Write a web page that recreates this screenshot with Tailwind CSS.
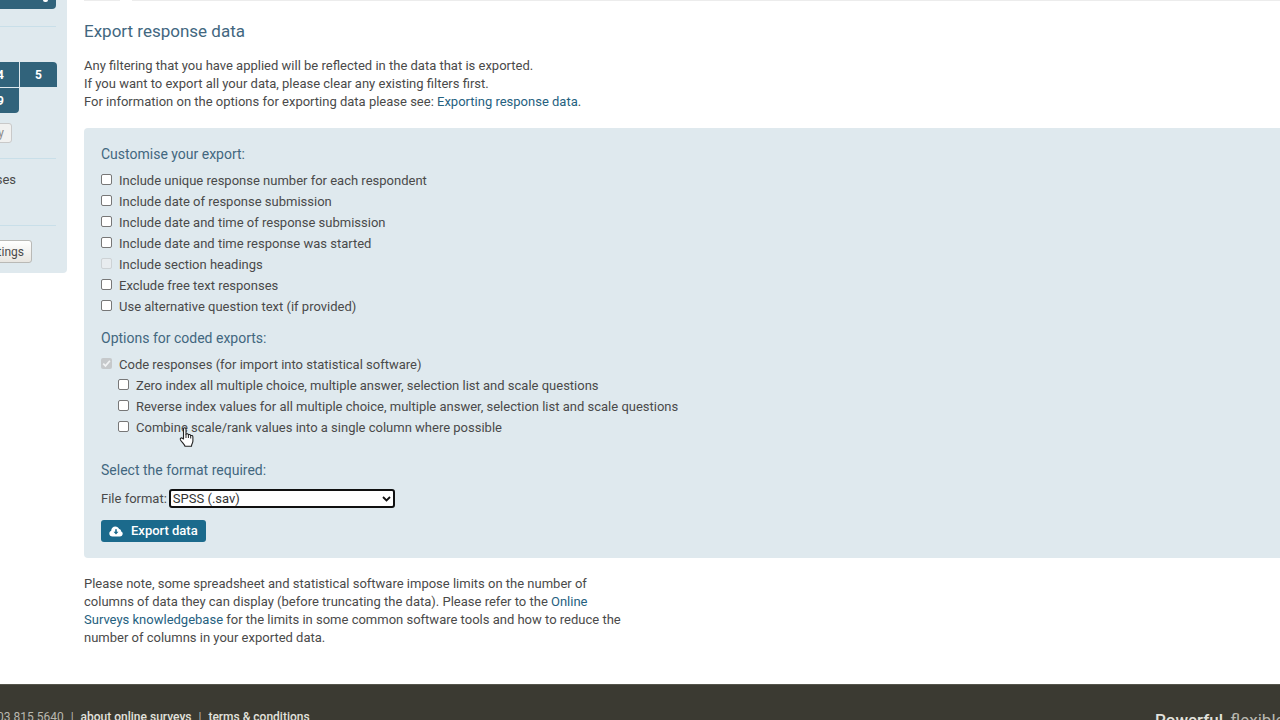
<!DOCTYPE html>
<html lang="en">
<head>
<meta charset="utf-8">
<title>Export response data</title>
<script src="https://cdn.jsdelivr.net/npm/@tailwindcss/browser@4"></script>
</head>
<body class="relative h-screen overflow-hidden bg-white font-[Roboto,sans-serif] text-[13px] leading-[18px] text-[#4a4a4a]">
<div class="flex items-start gap-[17px]">
  <aside class="w-[67px] shrink-0 overflow-hidden rounded-br bg-[#dfe9ee] pb-[10px]" aria-label="Survey navigation">
    <button type="button" aria-label="Search" class="mr-[11px] flex h-[9px] w-[56px] items-start justify-end rounded-br bg-[#31637b] pr-2"><span class="h-[2px] w-[5px] rounded-b-full bg-white"></span></button>
    <hr class="mt-[17px] mr-[11px] border-[#c9dfe9]">
    <nav class="mt-[35px] mr-[10px] flex flex-col gap-px text-[12px] font-bold text-white" aria-label="Pages">
      <div class="flex justify-end gap-px">
        <a href="#" class="flex h-[25px] w-[37px] shrink-0 items-center justify-center bg-[#31637b]">4</a>
        <a href="#" class="flex h-[25px] w-[37px] shrink-0 items-center justify-center rounded-tr bg-[#31637b]">5</a>
      </div>
      <div class="mr-[38px] flex justify-end">
        <a href="#" class="flex h-[25px] w-[37px] shrink-0 items-center justify-center rounded-br bg-[#31637b]">9</a>
      </div>
    </nav>
    <div class="mt-[10px] mr-[55px] flex justify-end">
      <button type="button" disabled class="h-[20px] w-[60px] shrink-0 rounded-[3px] border border-[#c9c9c9] bg-[#f1f1f0] pr-[7px] text-right text-[12px] leading-[18px] text-[#8a8a8a]">y</button>
    </div>
    <hr class="mt-[15px] mr-[11px] border-[#c9dfe9]">
    <div class="mt-3 mr-[51px] flex justify-end"><a href="#" class="shrink-0">ses</a></div>
    <hr class="mt-9 mr-[11px] border-[#c9dfe9]">
    <div class="mt-[14px] mr-[35px] flex justify-end">
      <button type="button" class="h-[23px] w-[90px] shrink-0 rounded-[3px] border border-[#b9b9b6] bg-linear-to-b from-white to-[#e8e6e1] pr-[7px] text-right text-[12px] leading-[20px]">tings</button>
    </div>
  </aside>
  <main class="min-w-0 flex-1">
    <div class="flex h-px gap-3"><div class="w-9 bg-[#ececec]"></div><div class="flex-1 bg-[#ececec]"></div></div>
    <h1 class="mt-[18px] text-[17px] leading-[24px] text-[#42677f]">Export response data</h1>
    <p class="mt-[14px]">Any filtering that you have applied will be reflected in the data that is exported.<br>If you want to export all your data, please clear any existing filters first.<br>For information on the options for exporting data please see: <a href="#" class="text-[#25617f]">Exporting response data</a>.</p>
    <form class="mt-[17px] rounded-l bg-[#dfe9ee] px-[17px] pt-4 pb-4">
      <h2 class="text-[14px] leading-[20px] text-[#42677f]">Customise your export:</h2>
      <div class="mt-[6px]">
        <label class="flex h-[21px] items-center gap-[7px]"><input type="checkbox" class="mb-[2px] size-[11px] shrink-0 appearance-none rounded-[2px] border border-[#777] bg-white">Include unique response number for each respondent</label>
        <label class="flex h-[21px] items-center gap-[7px]"><input type="checkbox" class="mb-[2px] size-[11px] shrink-0 appearance-none rounded-[2px] border border-[#777] bg-white">Include date of response submission</label>
        <label class="flex h-[21px] items-center gap-[7px]"><input type="checkbox" class="mb-[2px] size-[11px] shrink-0 appearance-none rounded-[2px] border border-[#777] bg-white">Include date and time of response submission</label>
        <label class="flex h-[21px] items-center gap-[7px]"><input type="checkbox" class="mb-[2px] size-[11px] shrink-0 appearance-none rounded-[2px] border border-[#777] bg-white">Include date and time response was started</label>
        <label class="flex h-[21px] items-center gap-[7px]"><input type="checkbox" disabled class="mb-[2px] size-[11px] shrink-0 appearance-none rounded-[2px] border border-[#cdd2d5] bg-[#e8ecef]">Include section headings</label>
        <label class="flex h-[21px] items-center gap-[7px]"><input type="checkbox" class="mb-[2px] size-[11px] shrink-0 appearance-none rounded-[2px] border border-[#777] bg-white">Exclude free text responses</label>
        <label class="flex h-[21px] items-center gap-[7px]"><input type="checkbox" class="mb-[2px] size-[11px] shrink-0 appearance-none rounded-[2px] border border-[#777] bg-white">Use alternative question text (if provided)</label>
      </div>
      <h2 class="mt-[11px] text-[14px] leading-[20px] text-[#42677f]">Options for coded exports:</h2>
      <div class="mt-[6px]">
        <label class="flex h-[21px] items-center gap-[7px]"><span class="relative mb-[2px] block size-[11px] shrink-0"><input type="checkbox" checked disabled class="block size-[11px] appearance-none rounded-[2px] bg-[#c6c9cb]"><svg class="absolute inset-0" viewBox="0 0 11 11" fill="none" stroke="#f1f3f4" stroke-width="1.7"><path d="M2.2 5.6 4.5 7.9 8.9 2.8"/></svg></span>Code responses (for import into statistical software)</label>
        <div class="pl-[17px]">
          <label class="flex h-[21px] items-center gap-[7px]"><input type="checkbox" class="mb-[2px] size-[11px] shrink-0 appearance-none rounded-[2px] border border-[#777] bg-white">Zero index all multiple choice, multiple answer, selection list and scale questions</label>
          <label class="flex h-[21px] items-center gap-[7px]"><input type="checkbox" class="mb-[2px] size-[11px] shrink-0 appearance-none rounded-[2px] border border-[#777] bg-white">Reverse index values for all multiple choice, multiple answer, selection list and scale questions</label>
          <label class="flex h-[21px] items-center gap-[7px]"><input type="checkbox" class="mb-[2px] size-[11px] shrink-0 appearance-none rounded-[2px] border border-[#777] bg-white">Combine scale/rank values into a single column where possible</label>
        </div>
      </div>
      <h2 class="mt-[22px] text-[14px] leading-[20px] text-[#42677f]">Select the format required:</h2>
      <div class="mt-[9px] flex items-center gap-[2px]">
        <label for="format">File format:</label>
        <div class="relative">
          <select id="format" class="block h-[19px] w-[226px] appearance-none rounded-[3px] border-2 border-[#101010] bg-white pl-[2px] text-[13px] leading-[15px] text-[#333]"><option>SPSS (.sav)</option></select>
          <svg class="pointer-events-none absolute top-[7px] right-[4px] h-[6px] w-[9px]" viewBox="0 0 9 6" fill="none" stroke="#111" stroke-width="1.8"><path d="M1 1 4.500 4.500 8 1"/></svg>
        </div>
      </div>
      <button type="button" class="mt-3 flex h-[22px] items-center gap-2 rounded-[3px] bg-[#1b6a8c] px-2 text-[13px] font-medium text-white">
        <svg class="h-[11px] w-[14px]" viewBox="0 0 14 11"><path fill="#fff" d="M3.500 10.500C1.500 10.500.3 9.200.3 7.500c0-1.300.8-2.300 1.900-2.700C2.200 2.200 4 .5 6.300.5c1.800 0 3.200 1 3.800 2.600 1.300 0 2.100 1 1.900 2.200 1 .4 1.700 1.300 1.700 2.400 0 1.600-1.200 2.800-2.800 2.800z"/><path fill="#1b6a8c" d="M6.200 3.300h1.600v2.500h1.700L7 8.400 4.500 5.800h1.700z"/></svg>
        Export data
      </button>
    </form>
    <p class="mt-[17px] max-w-[560px]">Please note, some spreadsheet and statistical software impose limits on the number of<br>columns of data they can display (before truncating the data). Please refer to the <a href="#" class="text-[#25617f]">Online<br>Surveys knowledgebase</a> for the limits in some common software tools and how to reduce the<br>number of columns in your exported data.</p>
  </main>
</div>
<footer class="mt-[37px] flex h-20 justify-between overflow-hidden whitespace-nowrap border-t border-[#55554b] bg-[#3b3a32] text-[12px] text-[#b9b8b0]">
  <div class="-ml-[3px] flex gap-[7px] pt-[23px]"><span>03 815 5640</span><span>|</span><a href="#" class="font-medium text-[#e2e2dd]">about online surveys</a><span>|</span><a href="#" class="font-medium text-[#e2e2dd]">terms &amp; conditions</a></div>
  <p class="w-[125px] pt-[25px] text-[17px] leading-[20px]"><strong class="font-medium text-[#e2e2dd]">Powerful</strong>, flexible</p>
</footer>
<svg class="absolute top-[426px] left-[179px] h-[22px] w-[16px]" viewBox="0 0 16 22" aria-hidden="true"><path fill="#fff" stroke="#222" stroke-width="1.1" stroke-linejoin="round" d="M4.500 13V3.200c0-2 2.500-2 2.500 0v5c.8-.8 2.200-.5 2.400.6.800-.6 2-.3 2.200.8 1-.4 2.300 0 2.300 1.300v4.200c0 2-1.400 3-1.400 5.200H6C5.500 18.500 3.200 16.500 1.500 14c-.9-1.600.8-2.600 1.900-1.700z"/><path fill="none" stroke="#222" d="M7 8v4M9.400 9v3M11.700 10v2.500"/></svg>
</body>
</html>
